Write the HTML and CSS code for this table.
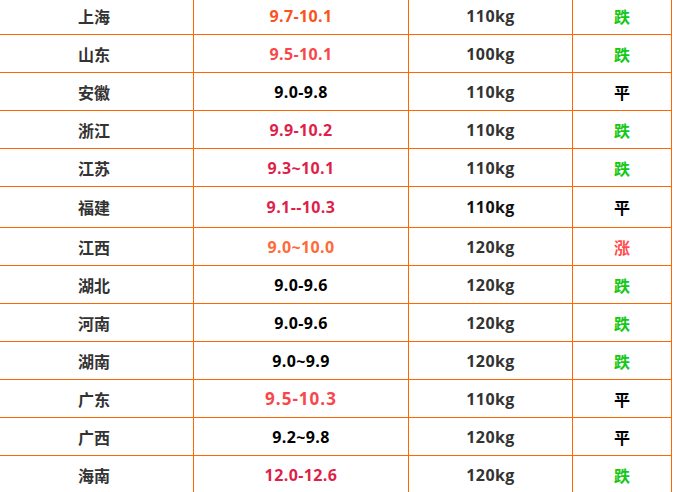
FILE: index.html
```html
<!DOCTYPE html>
<html lang="zh-CN">
<head>
<meta charset="utf-8">
<title>生猪价格</title>
<link rel="stylesheet" href="styles.css">
</head>
<body>
<div class="table">
  <div class="row"><div class="cell name">上海</div><div class="cell price c-orange">9.7-10.1</div><div class="cell weight">110kg</div><div class="cell trend down">跌</div></div>
  <div class="row"><div class="cell name">山东</div><div class="cell price c-red">9.5-10.1</div><div class="cell weight">100kg</div><div class="cell trend down">跌</div></div>
  <div class="row"><div class="cell name">安徽</div><div class="cell price c-black">9.0-9.8</div><div class="cell weight">110kg</div><div class="cell trend flat">平</div></div>
  <div class="row"><div class="cell name">浙江</div><div class="cell price c-crimson">9.9-10.2</div><div class="cell weight">110kg</div><div class="cell trend down">跌</div></div>
  <div class="row"><div class="cell name">江苏</div><div class="cell price c-crimson">9.3~10.1</div><div class="cell weight">110kg</div><div class="cell trend down">跌</div></div>
  <div class="row tall"><div class="cell name">福建</div><div class="cell price c-crimson">9.1--10.3</div><div class="cell weight w-black">110kg</div><div class="cell trend flat">平</div></div>
  <div class="row"><div class="cell name">江西</div><div class="cell price c-amber">9.0~10.0</div><div class="cell weight">120kg</div><div class="cell trend up">涨</div></div>
  <div class="row"><div class="cell name">湖北</div><div class="cell price c-black">9.0-9.6</div><div class="cell weight">120kg</div><div class="cell trend down">跌</div></div>
  <div class="row"><div class="cell name">河南</div><div class="cell price c-black">9.0-9.6</div><div class="cell weight">120kg</div><div class="cell trend down">跌</div></div>
  <div class="row"><div class="cell name">湖南</div><div class="cell price c-black">9.0~9.9</div><div class="cell weight">120kg</div><div class="cell trend down">跌</div></div>
  <div class="row"><div class="cell name">广东</div><div class="cell price c-red wide">9.5-10.3</div><div class="cell weight">110kg</div><div class="cell trend flat">平</div></div>
  <div class="row"><div class="cell name">广西</div><div class="cell price c-black">9.2~9.8</div><div class="cell weight">120kg</div><div class="cell trend flat">平</div></div>
  <div class="row"><div class="cell name">海南</div><div class="cell price c-crimson">12.0-12.6</div><div class="cell weight">120kg</div><div class="cell trend down">跌</div></div>
</div>
</body>
</html>
```

FILE: styles.css
```css
html, body {
  margin: 0;
  padding: 0;
  background: #ffffff;
  overflow: hidden;
}

body {
  font-family: "Open Sans", "Noto Sans CJK SC", sans-serif;
  font-weight: 700;
  font-size: 16px;
}

.table {
  display: flex;
  flex-direction: column;
  gap: 1px;
  padding: 1px;
  margin: -4px 0 0 -6px;
  width: 678px;
  background: #ff6600;
  box-sizing: border-box;
}

.row {
  display: grid;
  grid-template-columns: 198px 214px 163px 98px;
  gap: 1px;
  height: 37px;
}

.row.tall {
  height: 40px;
}

.cell {
  background: #ffffff;
  display: flex;
  align-items: center;
  justify-content: center;
  line-height: 1;
}

.name {
  color: #333333;
  font-family: "Noto Sans CJK SC", sans-serif;
}

.price,
.weight {
  letter-spacing: 0.4px;
}

.weight {
  color: #333333;
}

.w-black {
  color: #111111;
}

.trend {
  font-family: "Noto Sans CJK SC", sans-serif;
}

.down { color: #14c814; }
.up { color: #ff4d4d; }
.flat { color: #000000; }

.c-orange { color: #fa541c; }
.c-red { color: #f8474a; }
.c-crimson { color: #df1f4a; }
.c-amber { color: #ff6a3a; }
.c-black { color: #000000; }

.price.wide {
  letter-spacing: 1px;
  font-size: 17px;
}
```
